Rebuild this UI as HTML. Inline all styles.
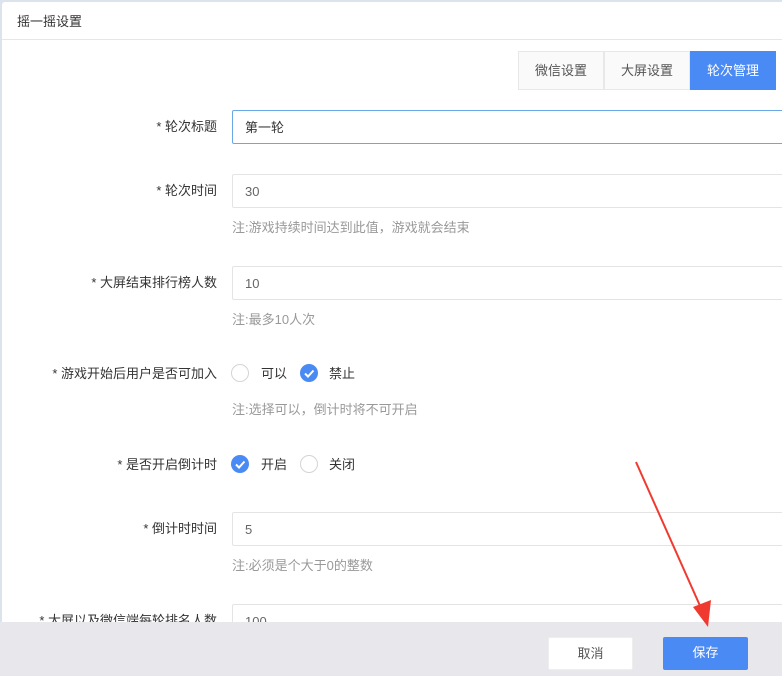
<!DOCTYPE html>
<html><head><meta charset="utf-8"><style>
*{margin:0;padding:0;box-sizing:border-box}
body{width:782px;height:676px;overflow:hidden;background:#dde3ec;font-family:"Liberation Sans","Noto Sans CJK SC",sans-serif;font-size:13px;color:#333;position:relative}
.panel{position:absolute;left:2px;top:2px;right:0;bottom:0;background:#fff;border-radius:3px 0 0 0}
.hd{height:38px;border-bottom:1px solid #e3e7ec;padding:9px 0 0 15px;font-size:13px;color:#333}
.tab{position:absolute;top:49px;height:39px;width:86px;line-height:38px;text-align:center;border:1px solid #e8e8e8;background:#fafafa;color:#555}
.lbl{position:absolute;right:565px;font-size:13px;color:#333;white-space:nowrap}
.inp{position:absolute;left:230px;right:-10px;height:34px;border:1px solid #e4e4e4;padding-left:12px;line-height:34px;color:#666;border-radius:2px}
.note{position:absolute;left:230px;color:#999;font-size:13px}
.r{position:absolute;width:18px;height:18px;border-radius:50%;border:1px solid #d4d4d4;background:#fff}
.rc{border:none;background:#4a8af4}
.rt{position:absolute;font-size:13px;color:#333}
.ft{position:absolute;left:0;right:0;top:622px;bottom:0;background:#e8e8ec}
.btn{position:absolute;top:637px;width:85px;height:33px;line-height:31px;text-align:center;border-radius:2px}
</style></head><body>
<div class="panel">
<div class="hd">摇一摇设置</div>
<div class="tab" style="left:516px">微信设置</div>
<div class="tab" style="left:602px">大屏设置</div>
<div class="tab" style="left:688px;background:#4a8af4;border-color:#4a8af4;color:#fff">轮次管理</div>

<div class="lbl" style="top:114px">* 轮次标题</div>
<div class="inp" style="top:108px;border-color:#6aa8e8;color:#333">第一轮</div>

<div class="lbl" style="top:178px">* 轮次时间</div>
<div class="inp" style="top:172px">30</div>
<div class="note" style="top:215px">注:游戏持续时间达到此值，游戏就会结束</div>

<div class="lbl" style="top:270px">* 大屏结束排行榜人数</div>
<div class="inp" style="top:264px">10</div>
<div class="note" style="top:307px">注:最多10人次</div>

<div class="lbl" style="top:361px">* 游戏开始后用户是否可加入</div>
<div class="r" style="left:229px;top:362px"></div><div class="rt" style="left:259px;top:361px">可以</div>
<div class="r rc" style="left:298px;top:362px"><svg width="18" height="18"><path d="M5 9.5l3 3 5.5-6" stroke="#fff" stroke-width="2" fill="none"/></svg></div><div class="rt" style="left:327px;top:361px">禁止</div>
<div class="note" style="top:397px">注:选择可以，倒计时将不可开启</div>

<div class="lbl" style="top:452px">* 是否开启倒计时</div>
<div class="r rc" style="left:229px;top:453px"><svg width="18" height="18"><path d="M5 9.5l3 3 5.5-6" stroke="#fff" stroke-width="2" fill="none"/></svg></div><div class="rt" style="left:259px;top:452px">开启</div>
<div class="r" style="left:298px;top:453px"></div><div class="rt" style="left:327px;top:452px">关闭</div>

<div class="lbl" style="top:516px">* 倒计时时间</div>
<div class="inp" style="top:510px">5</div>
<div class="note" style="top:553px">注:必须是个大于0的整数</div>

<div class="lbl" style="top:608px">* 大屏以及微信端每轮排名人数</div>
<div class="inp" style="top:602px">100</div>
</div>
<div class="ft"></div>
<div class="btn" style="left:548px;background:#fff;border:1px solid #eee;color:#555">取消</div>
<div class="btn" style="left:663px;background:#4a8af4;color:#fff">保存</div>
<svg style="position:absolute;left:0;top:0" width="782" height="676"><path d="M636 462L701 608" stroke="#f03a30" stroke-width="2"/><path d="M693 607L708 627L711 600Z" fill="#f03a30"/></svg>
</body></html>
